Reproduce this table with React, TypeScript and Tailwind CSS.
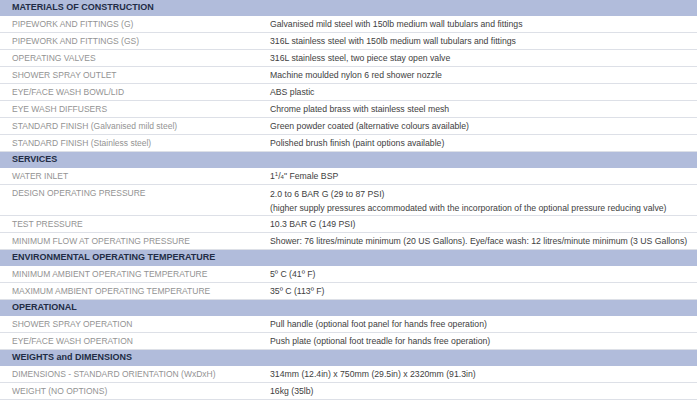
import React from 'react';

type Row = { label: string; value: React.ReactNode; tall?: boolean };
type Section = { title: React.ReactNode; rows: Row[] };

const sections: Section[] = [
  {
    title: 'MATERIALS OF CONSTRUCTION',
    rows: [
      { label: 'PIPEWORK AND FITTINGS (G)', value: 'Galvanised mild steel with 150lb medium wall tubulars and fittings' },
      { label: 'PIPEWORK AND FITTINGS (GS)', value: '316L stainless steel with 150lb medium wall tubulars and fittings' },
      { label: 'OPERATING VALVES', value: '316L stainless steel, two piece stay open valve' },
      { label: 'SHOWER SPRAY OUTLET', value: 'Machine moulded nylon 6 red shower nozzle' },
      { label: 'EYE/FACE WASH BOWL/LID', value: 'ABS plastic' },
      { label: 'EYE WASH DIFFUSERS', value: 'Chrome plated brass with stainless steel mesh' },
      { label: 'STANDARD FINISH (Galvanised mild steel)', value: 'Green powder coated (alternative colours available)' },
      { label: 'STANDARD FINISH (Stainless steel)', value: 'Polished brush finish (paint options available)' },
    ],
  },
  {
    title: 'SERVICES',
    rows: [
      {
        label: 'WATER INLET',
        value: (
          <>
            1<sup className="text-[6px]">1</sup>/<span className="text-[6px]">4</span>" Female BSP
          </>
        ),
      },
      {
        label: 'DESIGN OPERATING PRESSURE',
        tall: true,
        value: (
          <>
            <div>2.0 to 6 BAR G (29 to 87 PSI)</div>
            <div>(higher supply pressures accommodated with the incorporation of the optional pressure reducing valve)</div>
          </>
        ),
      },
      { label: 'TEST PRESSURE', value: '10.3 BAR G (149 PSI)' },
      {
        label: 'MINIMUM FLOW AT OPERATING PRESSURE',
        value: 'Shower: 76 litres/minute minimum (20 US Gallons). Eye/face wash: 12 litres/minute minimum (3 US Gallons)',
      },
    ],
  },
  {
    title: 'ENVIRONMENTAL OPERATING TEMPERATURE',
    rows: [
      { label: 'MINIMUM AMBIENT OPERATING TEMPERATURE', value: '5º C (41º F)' },
      { label: 'MAXIMUM AMBIENT OPERATING TEMPERATURE', value: '35º C (113º F)' },
    ],
  },
  {
    title: 'OPERATIONAL',
    rows: [
      { label: 'SHOWER SPRAY OPERATION', value: 'Pull handle (optional foot panel for hands free operation)' },
      { label: 'EYE/FACE WASH OPERATION', value: 'Push plate (optional foot treadle for hands free operation)' },
    ],
  },
  {
    title: 'WEIGHTS and DIMENSIONS',
    rows: [
      { label: 'DIMENSIONS - STANDARD ORIENTATION (WxDxH)', value: '314mm (12.4in) x 750mm (29.5in) x 2320mm (91.3in)' },
      { label: 'WEIGHT (NO OPTIONS)', value: '16kg (35lb)' },
    ],
  },
];

export default function App() {
  return (
    <div
      className="w-[700px] h-[406px] bg-white overflow-hidden pr-[3px]"
      style={{ fontFamily: '"Liberation Sans", Arial, sans-serif' }}
    >
      {sections.map((section, i) => (
        <div key={i}>
          <div className="h-[16px] flex items-center pl-[12px] bg-[#b1bcdb] text-[#222c45] text-[9px] font-bold">
            {section.title}
          </div>
          {section.rows.map((row, j) => (
            <div
              key={j}
              className={
                'flex border-b border-[#dde0e7] ' +
                (row.tall ? 'h-[31px] pt-[2px]' : 'h-[17px] items-center')
              }
            >
              <div className="w-[270px] shrink-0 pl-[12px] text-[#939393] text-[8.5px] leading-[13px]">{row.label}</div>
              <div className="text-[#3e3e3e] text-[8.7px] leading-[14px] whitespace-nowrap">{row.value}</div>
            </div>
          ))}
        </div>
      ))}
    </div>
  );
}
